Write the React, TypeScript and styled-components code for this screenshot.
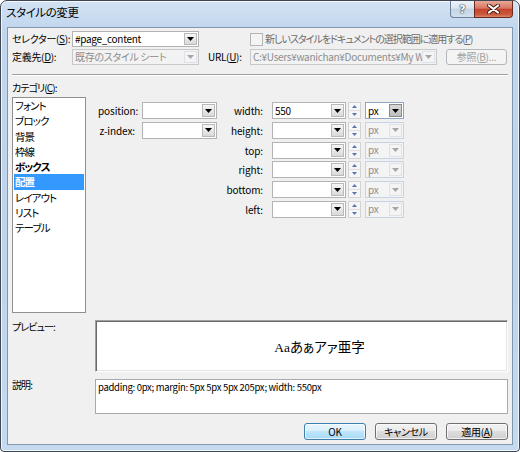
import React from "react";
import styled, { createGlobalStyle } from "styled-components";

const GlobalStyle = createGlobalStyle`
  html, body { margin: 0; padding: 0; }
  body {
    width: 520px; height: 452px; overflow: hidden; background: #ffffff;
    font-family: "Noto Sans CJK JP", "Noto Sans", sans-serif;
    font-size: 10px; color: #000;
    letter-spacing: -0.3px;
    font-feature-settings: "palt";
  }
  * { box-sizing: border-box; }
`;

type Variant = "normal" | "disabled" | "unit" | "unitDisabled";

const borderColors: Record<Variant, string> = {
  normal: "#b3b3b3",
  disabled: "#c8c8c8",
  unit: "#8ea5c4",
  unitDisabled: "#c5d3e5",
};
const bgColors: Record<Variant, string> = {
  normal: "#ffffff",
  disabled: "#f2f2f2",
  unit: "#ffffff",
  unitDisabled: "#f4f4f4",
};

const Window = styled.div`
  width: 520px;
  height: 452px;
  display: flex;
  flex-direction: column;
  border: 1px solid #3f4854;
  border-radius: 7px 7px 4px 4px;
  background: linear-gradient(to bottom, #d3e3f4 0px, #c1d6ed 28px, #bed4ec 60%, #c6daef 100%);
  box-shadow: inset 0 0 0 1px rgba(255, 255, 255, 0.75);
  overflow: hidden;
`;

const TitleBar = styled.div`
  height: 26px;
  display: flex;
  align-items: flex-start;
  flex-shrink: 0;
`;

const TitleText = styled.div`
  font-size: 11.5px;
  letter-spacing: -0.4px;
  line-height: 16px;
  margin: 3px 0 0 5px;
  color: #000;
`;

const CaptionButtons = styled.div`
  margin-left: auto;
  margin-right: 6px;
  display: flex;
`;

const HelpButton = styled.div`
  width: 24px;
  height: 17px;
  border: 1px solid #6f8099;
  border-top: none;
  border-right: none;
  border-radius: 0 0 0 4px;
  background: linear-gradient(to bottom, #eef3fa 0%, #dbe5f1 45%, #c5d3e4 50%, #d3dfed 100%);
  display: flex;
  align-items: center;
  justify-content: center;
  color: #ffffff;
  font-family: "DejaVu Sans", sans-serif;
  font-weight: bold;
  font-size: 11px;
  letter-spacing: 0;
  text-shadow: 0 0 1px #2c3a4e, 0 0 1px #2c3a4e, 0 0 2px #44546b;
`;

const CloseButton = styled.div`
  width: 39px;
  height: 17px;
  border: 1px solid #6a2a1f;
  border-top: none;
  border-radius: 0 0 4px 0;
  background: linear-gradient(to bottom, #e8a998 0%, #d97662 45%, #c4432b 52%, #cd5a3f 85%, #dc8a6a 100%);
  display: flex;
  align-items: center;
  justify-content: center;
`;

const Client = styled.div`
  flex: 1;
  margin: 0 6px 6px 6px;
  background: #f0f0f0;
  border: 1px solid #8396af;
  display: flex;
  flex-direction: column;
  padding: 3px 4px 0 4px;
`;

const TopRow = styled.div<{ $mt?: number }>`
  display: flex;
  align-items: center;
  height: 16px;
  margin-top: ${p => p.$mt ?? 0}px;
`;

const Label = styled.span<{ $w?: number; $ml?: number; $disabled?: boolean; $ls?: number }>`
  width: ${p => (p.$w ? `${p.$w}px` : "auto")};
  margin-left: ${p => p.$ml ?? 0}px;
  flex-shrink: 0;
  white-space: nowrap;
  color: ${p => (p.$disabled ? "#6d6d6d" : "#000")};
  letter-spacing: ${p => p.$ls ?? -0.3}px;
  line-height: 14px;
`;

const Field = styled.div<{ $w: number; $h: number; $variant: Variant }>`
  width: ${p => p.$w}px;
  height: ${p => p.$h}px;
  display: flex;
  align-items: stretch;
  padding: 0 1px;
  flex-shrink: 0;
  border: 1px solid ${p => borderColors[p.$variant]};
  background: ${p => bgColors[p.$variant]};
`;

const FieldText = styled.span<{ $disabled?: boolean }>`
  flex: 1;
  min-width: 0;
  overflow: hidden;
  white-space: nowrap;
  padding-left: 1px;
  align-self: center;
  line-height: 14px;
  color: ${p => (p.$disabled ? "#8d8d8d" : "#000")};
`;

const DropButton = styled.span<{ $variant: Variant }>`
  width: 13px;
  margin: 1px 0;
  flex-shrink: 0;
  display: flex;
  align-items: center;
  justify-content: center;
  border: 1px solid
    ${p =>
      p.$variant === "unit"
        ? "#8b8b8b"
        : p.$variant === "normal"
        ? "#b9b9b9"
        : "#dde2ea"};
  background: ${p =>
    p.$variant === "unit"
      ? "linear-gradient(to bottom, #d9d9d9, #bdbdbd)"
      : p.$variant === "normal"
      ? "linear-gradient(to bottom, #f6f6f6, #d9d9d9)"
      : "#f4f4f4"};
`;

const Checkbox = styled.span`
  width: 13px;
  height: 13px;
  flex-shrink: 0;
  margin-left: 51px;
  border: 1px solid #b5b5b5;
  background: #f4f4f4;
`;

const BrowseButton = styled.div`
  width: 61px;
  height: 16px;
  margin-left: 9px;
  border: 1px solid #b3b7bb;
  border-radius: 3px;
  background: #f4f4f4;
  color: #a0a0a0;
  display: flex;
  align-items: center;
  justify-content: center;
  line-height: 12px;
`;

const Separator = styled.div`
  margin-top: 9px;
  height: 2px;
  border-top: 1px solid #a0a0a0;
  border-bottom: 1px solid #ffffff;
`;

const SectionLabel = styled.div`
  margin-top: 5px;
  line-height: 14px;
  height: 14px;
  letter-spacing: -0.9px;
`;

const Middle = styled.div`
  display: flex;
  margin-top: 2px;
  align-items: flex-start;
`;

const ListBox = styled.div`
  width: 74px;
  height: 216px;
  border: 1px solid #8f8f8f;
  background: #ffffff;
  padding: 0 1px;
  flex-shrink: 0;
`;

const ListItem = styled.div<{ $bold?: boolean; $selected?: boolean }>`
  height: 15.25px;
  line-height: 15.25px;
  padding-left: 1px;
  font-size: 10.5px;
  letter-spacing: -0.9px;
  font-weight: ${p => (p.$bold ? 700 : 400)};
  background: ${p => (p.$selected ? "#3399ff" : "transparent")};
  color: ${p => (p.$selected ? "#ffffff" : "#000")};
  white-space: nowrap;
`;

const PropsGrid = styled.div`
  margin-left: 12px;
  margin-top: 5px;
  display: grid;
  grid-template-columns: 44px 75px 55px 74px 15px 43px;
  grid-auto-rows: 17px;
  row-gap: 2.75px;
`;

const PropLabel = styled.span<{ $col: number }>`
  grid-column: ${p => p.$col};
  text-align: right;
  padding-right: ${p => (p.$col === 1 ? 7 : 9)}px;
  line-height: 17px;
  letter-spacing: -0.1px;
  white-space: nowrap;
`;

const Cell = styled.div<{ $col: number }>`
  grid-column: ${p => p.$col};
  display: flex;
  justify-content: flex-end;
`;

const Spin = styled.div`
  width: 13px;
  height: 17px;
  display: flex;
  flex-direction: column;
  border: 1px solid #d3d3d3;
  background: #f6f6f6;
`;

const SpinHalf = styled.span<{ $top?: boolean }>`
  flex: 1;
  display: flex;
  align-items: center;
  justify-content: center;
  border-bottom: ${p => (p.$top ? "1px solid #dedede" : "none")};
`;

const BoxRow = styled.div<{ $mt: number }>`
  display: flex;
  align-items: flex-start;
  margin-top: ${p => p.$mt}px;
`;

const BoxLabel = styled.span<{ $mt?: number }>`
  width: 83px;
  flex-shrink: 0;
  line-height: 12px;
  letter-spacing: -0.9px;
  margin-top: ${p => p.$mt ?? 0}px;
`;

const PreviewBox = styled.div`
  flex: 1;
  height: 52px;
  background: #ffffff;
  border-style: solid;
  border-width: 1px;
  border-color: #a0a0a0 #ffffff #ffffff #a0a0a0;
  box-shadow: inset 1px 1px 0 #696969, inset -1px -1px 0 #e3e3e3;
  display: flex;
  align-items: center;
  justify-content: center;
  padding-left: 36px;
`;

const PreviewText = styled.span`
  font-family: "Liberation Serif", "Noto Sans CJK JP", serif;
  font-size: 13.5px;
  letter-spacing: 0;
  color: #000;
`;

const DescBox = styled.div`
  flex: 1;
  height: 35px;
  background: #ffffff;
  border: 1px solid #a7a9ad;
  padding: 1px 2px;
  font-size: 9.5px;
  line-height: 12px;
  letter-spacing: -0.3px;
`;

const ButtonRow = styled.div`
  margin-top: 9px;
  display: flex;
  justify-content: flex-end;
  gap: 9px;
`;

const DialogButton = styled.div<{ $default?: boolean }>`
  width: 62px;
  height: 17px;
  border-radius: 3px;
  border: 1px solid ${p => (p.$default ? "#3c7fb1" : "#707070")};
  background: ${p =>
    p.$default
      ? "linear-gradient(to bottom, #eaf6fd 0%, #d9f0fc 45%, #bee6fd 50%, #a7d9f5 100%)"
      : "linear-gradient(to bottom, #f2f2f2 0%, #ebebeb 45%, #dddddd 50%, #cfcfcf 100%)"};
  box-shadow: inset 0 0 0 1px rgba(255, 255, 255, 0.7);
  display: flex;
  align-items: center;
  justify-content: center;
  line-height: 12px;
`;

const DownArrow = ({ color }: { color: string }) => (
  <svg width="7" height="4" viewBox="0 0 7 4">
    <path d="M0 0H7L3.5 4Z" fill={color} />
  </svg>
);

const SpinArrow = ({ up }: { up?: boolean }) => (
  <svg width="5" height="3" viewBox="0 0 5 3">
    <path d={up ? "M0 3H5L2.5 0Z" : "M0 0H5L2.5 3Z"} fill="#5a76a8" />
  </svg>
);

const Combo = ({
  w,
  h,
  variant,
  text,
}: {
  w: number;
  h: number;
  variant: Variant;
  text?: string;
}) => {
  const disabled = variant === "disabled" || variant === "unitDisabled";
  return (
    <Field $w={w} $h={h} $variant={variant}>
      <FieldText $disabled={disabled}>{text}</FieldText>
      <DropButton $variant={variant}>
        <DownArrow color={disabled ? "#a6a6a6" : "#000"} />
      </DropButton>
    </Field>
  );
};

const categories = [
  { label: "フォント" },
  { label: "ブロック" },
  { label: "背景" },
  { label: "枠線" },
  { label: "ボックス", bold: true },
  { label: "配置", bold: true, selected: true },
  { label: "レイアウト" },
  { label: "リスト" },
  { label: "テーブル" },
];

const leftRows = ["position:", "z-index:"];
const rightRows: { label: string; value?: string; unitEnabled?: boolean }[] = [
  { label: "width:", value: "550", unitEnabled: true },
  { label: "height:" },
  { label: "top:" },
  { label: "right:" },
  { label: "bottom:" },
  { label: "left:" },
];

export default function App() {
  return (
    <>
      <GlobalStyle />
      <Window>
        <TitleBar>
          <TitleText>スタイルの変更</TitleText>
          <CaptionButtons>
            <HelpButton>?</HelpButton>
            <CloseButton>
              <svg width="13" height="10" viewBox="0 0 13 10">
                <path d="M2 1.5L11 8.5M11 1.5L2 8.5" stroke="#4a1d14" strokeWidth="4" strokeLinecap="round" />
                <path d="M2 1.5L11 8.5M11 1.5L2 8.5" stroke="#ffffff" strokeWidth="2.2" strokeLinecap="round" />
              </svg>
            </CloseButton>
          </CaptionButtons>
        </TitleBar>
        <Client>
          <TopRow>
            <Label $w={60}>
              セレクター(<u>S</u>):
            </Label>
            <Combo w={127} h={16} variant="normal" text="#page_content" />
            <Checkbox />
            <Label $ml={2} $disabled $ls={-1}>
              新しいスタイルをドキュメントの選択範囲に適用する(<u>P</u>)
            </Label>
          </TopRow>
          <TopRow $mt={2}>
            <Label $w={60}>
              定義先(<u>D</u>):
            </Label>
            <Combo w={127} h={16} variant="disabled" text="既存のスタイル シート" />
            <Label $w={42} $ml={9}>
              URL(<u>U</u>):
            </Label>
            <Combo
              w={187}
              h={16}
              variant="disabled"
              text="C:¥Users¥wanichan¥Documents¥My Web"
            />
            <BrowseButton>
              参照(<u>B</u>)...
            </BrowseButton>
          </TopRow>
          <Separator />
          <SectionLabel>
            カテゴリ(<u>C</u>):
          </SectionLabel>
          <Middle>
            <ListBox>
              {categories.map(c => (
                <ListItem key={c.label} $bold={c.bold} $selected={c.selected}>
                  {c.label}
                </ListItem>
              ))}
            </ListBox>
            <PropsGrid>
              {rightRows.map((r, i) => (
                <React.Fragment key={r.label}>
                  {i < leftRows.length && (
                    <>
                      <PropLabel $col={1}>{leftRows[i]}</PropLabel>
                      <Cell $col={2}>
                        <Combo w={75} h={17} variant="normal" />
                      </Cell>
                    </>
                  )}
                  <PropLabel $col={3}>{r.label}</PropLabel>
                  <Cell $col={4}>
                    <Combo w={74} h={17} variant="normal" text={r.value} />
                  </Cell>
                  <Cell $col={5}>
                    <Spin>
                      <SpinHalf $top>
                        <SpinArrow up />
                      </SpinHalf>
                      <SpinHalf>
                        <SpinArrow />
                      </SpinHalf>
                    </Spin>
                  </Cell>
                  <Cell $col={6}>
                    <Combo
                      w={39}
                      h={17}
                      variant={r.unitEnabled ? "unit" : "unitDisabled"}
                      text="px"
                    />
                  </Cell>
                </React.Fragment>
              ))}
            </PropsGrid>
          </Middle>
          <BoxRow $mt={7}>
            <BoxLabel $mt={1}>プレビュー:</BoxLabel>
            <PreviewBox>
              <PreviewText>Aaあぁアァ亜字</PreviewText>
            </PreviewBox>
          </BoxRow>
          <BoxRow $mt={7}>
            <BoxLabel $mt={0}>説明:</BoxLabel>
            <DescBox>padding: 0px; margin: 5px 5px 5px 205px; width: 550px</DescBox>
          </BoxRow>
          <ButtonRow>
            <DialogButton $default>OK</DialogButton>
            <DialogButton>キャンセル</DialogButton>
            <DialogButton>
              適用(<u>A</u>)
            </DialogButton>
          </ButtonRow>
        </Client>
      </Window>
    </>
  );
}
